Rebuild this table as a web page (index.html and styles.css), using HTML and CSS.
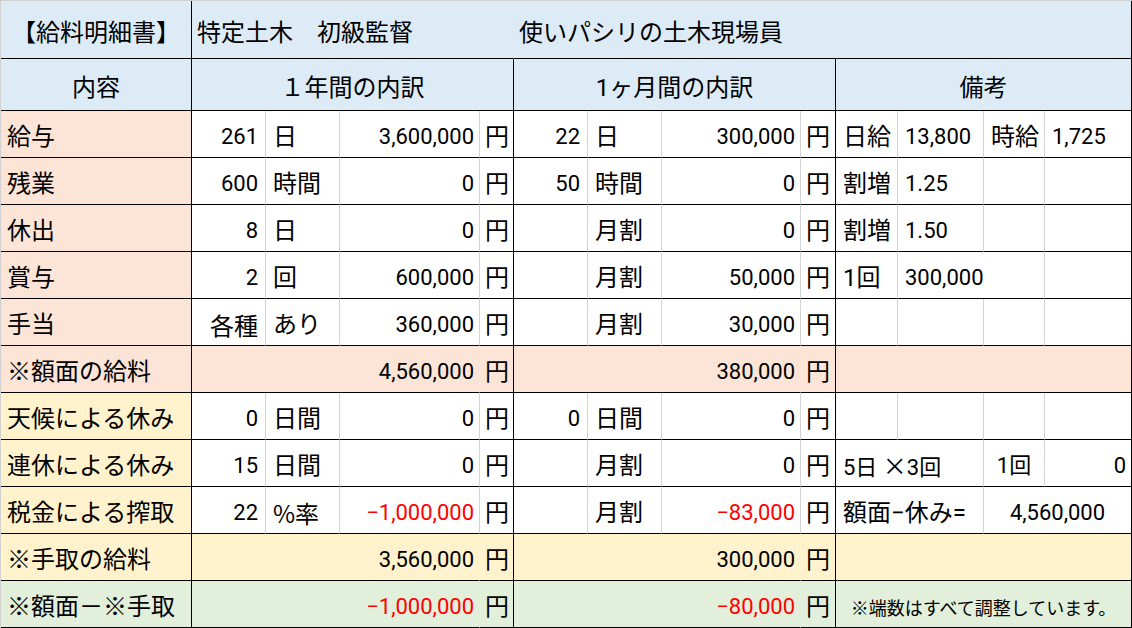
FILE: index.html
```html
<!DOCTYPE html>
<html lang="ja">
<head>
<meta charset="utf-8">
<title>給料明細書</title>
<link rel="stylesheet" href="styles.css">
</head>
<body>
<table class="sheet">
  <colgroup>
    <col class="w191"><col class="w74"><col class="w74"><col class="w140"><col class="w34">
    <col class="w74"><col class="w74"><col class="w139"><col class="w35">
    <col class="w62"><col class="w86"><col class="w61"><col class="w87">
  </colgroup>
  <tr class="title">
    <td class="ctr gb">【給料明細書】</td>
    <td colspan="4" class="left nb">特定土木　初級監督</td>
    <td colspan="8" class="left gb">使いパシリの土木現場員</td>
  </tr>
  <tr class="head">
    <td class="ctr gb">内容</td>
    <td colspan="4" class="ctr gb">１年間の内訳</td>
    <td colspan="4" class="ctr gb">1ヶ月間の内訳</td>
    <td colspan="4" class="ctr gb">備考</td>
  </tr>
  <tr class="row">
    <td class="lab salmon gb">給与</td>
    <td class="num">261</td><td class="unit">日</td><td class="amt">3,600,000</td><td class="yen gb">円</td>
    <td class="num">22</td><td class="unit">日</td><td class="amt">300,000</td><td class="yen gb">円</td>
    <td class="rm">日給</td><td class="rm n">13,800</td><td class="rm">時給</td><td class="rm n gb">1,725</td>
  </tr>
  <tr class="row">
    <td class="lab salmon gb">残業</td>
    <td class="num">600</td><td class="unit">時間</td><td class="amt">0</td><td class="yen gb">円</td>
    <td class="num">50</td><td class="unit">時間</td><td class="amt">0</td><td class="yen gb">円</td>
    <td class="rm">割増</td><td class="rm n">1.25</td><td class="rm"></td><td class="rm gb"></td>
  </tr>
  <tr class="row">
    <td class="lab salmon gb">休出</td>
    <td class="num">8</td><td class="unit">日</td><td class="amt">0</td><td class="yen gb">円</td>
    <td class="num"></td><td class="unit">月割</td><td class="amt">0</td><td class="yen gb">円</td>
    <td class="rm">割増</td><td class="rm n">1.50</td><td class="rm"></td><td class="rm gb"></td>
  </tr>
  <tr class="row">
    <td class="lab salmon gb">賞与</td>
    <td class="num">2</td><td class="unit">回</td><td class="amt">600,000</td><td class="yen gb">円</td>
    <td class="num"></td><td class="unit">月割</td><td class="amt">50,000</td><td class="yen gb">円</td>
    <td class="rm">1回</td><td colspan="2" class="rm n">300,000</td><td class="rm gb"></td>
  </tr>
  <tr class="row">
    <td class="lab salmon gb">手当</td>
    <td class="num jp">各種</td><td class="unit">あり</td><td class="amt">360,000</td><td class="yen gb">円</td>
    <td class="num"></td><td class="unit">月割</td><td class="amt">30,000</td><td class="yen gb">円</td>
    <td class="rm"></td><td class="rm"></td><td class="rm"></td><td class="rm gb"></td>
  </tr>
  <tr class="row salmon">
    <td class="lab gb">※額面の給料</td>
    <td colspan="3" class="amt nb">4,560,000</td><td class="yen gb">円</td>
    <td colspan="3" class="amt nb">380,000</td><td class="yen gb">円</td>
    <td colspan="4" class="gb"></td>
  </tr>
  <tr class="row">
    <td class="lab yellow gb">天候による休み</td>
    <td class="num">0</td><td class="unit">日間</td><td class="amt">0</td><td class="yen gb">円</td>
    <td class="num">0</td><td class="unit">日間</td><td class="amt">0</td><td class="yen gb">円</td>
    <td class="rm"></td><td class="rm"></td><td class="rm"></td><td class="rm gb"></td>
  </tr>
  <tr class="row">
    <td class="lab yellow gb">連休による休み</td>
    <td class="num">15</td><td class="unit">日間</td><td class="amt">0</td><td class="yen gb">円</td>
    <td class="num"></td><td class="unit">月割</td><td class="amt">0</td><td class="yen gb">円</td>
    <td colspan="2" class="rm n">5日 <span class="jp">×</span>3回</td><td class="rm n ctr">1回</td><td class="rm n rt gb">0</td>
  </tr>
  <tr class="row">
    <td class="lab yellow gb">税金による搾取</td>
    <td class="num">22</td><td class="unit jp">%率</td><td class="amt red">−1,000,000</td><td class="yen gb">円</td>
    <td class="num"></td><td class="unit">月割</td><td class="amt red">−83,000</td><td class="yen gb">円</td>
    <td colspan="2" class="rm">額面−休み=</td><td colspan="2" class="rm n ctr gb">4,560,000</td>
  </tr>
  <tr class="row yellow">
    <td class="lab gb">※手取の給料</td>
    <td colspan="3" class="amt nb">3,560,000</td><td class="yen gb">円</td>
    <td colspan="3" class="amt nb">300,000</td><td class="yen gb">円</td>
    <td colspan="4" class="gb"></td>
  </tr>
  <tr class="row green">
    <td class="lab gb">※額面－※手取</td>
    <td colspan="3" class="amt red nb">−1,000,000</td><td class="yen gb">円</td>
    <td colspan="3" class="amt red nb">−80,000</td><td class="yen gb">円</td>
    <td colspan="4" class="note gb">※端数はすべて調整しています。</td>
  </tr>
</table>
</body>
</html>
```

FILE: styles.css
```css
html, body {
  margin: 0;
  padding: 0;
  background: #ffffff;
}

.sheet {
  border-collapse: separate;
  border-spacing: 0;
  table-layout: fixed;
  width: 1132px;
  border-top: 1px solid #d0d0d0;
  border-left: 1px solid #d0d0d0;
  font-family: Roboto, "Noto Sans CJK JP", sans-serif;
  font-size: 24px;
  color: #000000;
}

.w191 { width: 191px; }
.w74 { width: 74px; }
.w140 { width: 140px; }
.w34 { width: 34px; }
.w139 { width: 139px; }
.w35 { width: 35px; }
.w62 { width: 62px; }
.w86 { width: 86px; }
.w61 { width: 61px; }
.w87 { width: 87px; }

.sheet td {
  padding: 6px 0 0 0;
  border-right: 1px solid #d4d4d4;
  border-bottom: 1px solid #000000;
  vertical-align: middle;
  white-space: nowrap;
  overflow: hidden;
  line-height: 28px;
}

.sheet td.gb { border-right-color: #000000; }
.sheet td.nb { border-right-color: transparent; }

.title { height: 58px; background: #ddebf7; }
.head { height: 52px; background: #ddebf7; }
.row { height: 47px; }

.ctr { text-align: center; }
.left { text-align: left; padding-left: 5px !important; }
.rt { text-align: right; }

.lab { padding-left: 6px !important; text-align: left; }
.num { text-align: right; padding-right: 7px !important; font-size: 22px; }
.num.jp { font-size: 24px; }
.unit { text-align: left; padding-left: 7px !important; }
.amt { text-align: right; padding-right: 5px !important; font-size: 22px; }
.yen { text-align: left; padding-left: 5px !important; }
.rm { text-align: left; padding-left: 7px !important; }
.rm.ctr { text-align: center; padding-left: 0 !important; }
.rm.rt { text-align: right; padding-left: 0 !important; padding-right: 5px !important; }
.n { font-size: 22px; }
.jp { font-family: "Noto Sans CJK JP", sans-serif; font-size: 24px; }

.red { color: #ff0000; }

.salmon, .salmon td { background: #fce4d6; }
.yellow, .yellow td { background: #fff2cc; }
.green, .green td { background: #e2efda; }

.row td.lab.salmon { background: #fce4d6; }
.row td.lab.yellow { background: #fff2cc; }

.note {
  text-align: center;
  font-family: "Noto Sans CJK JP", sans-serif;
  font-size: 18px;
}
```
